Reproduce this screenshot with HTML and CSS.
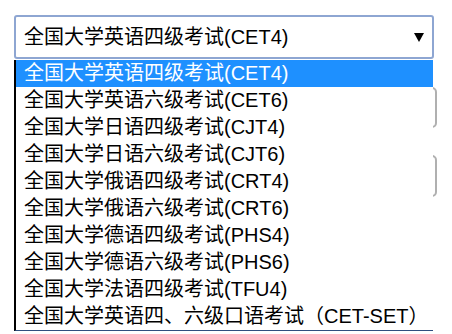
FILE: index.html
```html
<!DOCTYPE html>
<html lang="zh-CN">
<head>
<meta charset="utf-8">
<title>考试选择</title>
<link rel="stylesheet" href="styles.css">
</head>
<body>
<div class="page">
  <div class="select">
    <span class="select-text">全国大学英语四级考试(CET4)</span>
    <svg class="arrow" width="10" height="9" viewBox="0 0 10 9"><polygon points="0,0 10,0 5,9" fill="#000"/></svg>
  </div>
  <div class="field field-one"></div>
  <div class="field field-two"></div>

  <ul class="dropdown">
    <li class="option selected">全国大学英语四级考试(CET4)</li>
    <li class="option">全国大学英语六级考试(CET6)</li>
    <li class="option">全国大学日语四级考试(CJT4)</li>
    <li class="option">全国大学日语六级考试(CJT6)</li>
    <li class="option">全国大学俄语四级考试(CRT4)</li>
    <li class="option">全国大学俄语六级考试(CRT6)</li>
    <li class="option">全国大学德语四级考试(PHS4)</li>
    <li class="option">全国大学德语六级考试(PHS6)</li>
    <li class="option">全国大学法语四级考试(TFU4)</li>
    <li class="option">全国大学英语四、六级口语考试（CET-SET）</li>
  </ul>
</div>
</body>
</html>
```

FILE: styles.css
```css
html, body {
  margin: 0;
  padding: 0;
  background: #ffffff;
}

body {
  font-family: "Liberation Sans", "Noto Sans CJK SC", sans-serif;
  color: #000;
  width: 452px;
  height: 334px;
  overflow: hidden;
}

.page {
  position: relative;
  padding: 15px 0 0 14px;
}

.select {
  box-sizing: border-box;
  width: 420px;
  height: 44px;
  border: 2px solid #8ea6d2;
  border-radius: 3px;
  display: flex;
  align-items: center;
  justify-content: space-between;
  padding: 0 8px 0 8px;
  font-size: 20px;
  background: #fff;
}

.select-text {
  line-height: 24px;
  padding-bottom: 1px;
}

.arrow {
  display: block;
  margin-top: 1px;
}

.field {
  box-sizing: border-box;
  width: 423px;
  height: 41px;
  border: 2px solid #b0b0b0;
  border-radius: 5px;
}

.field-one {
  margin-top: 28px;
}

.field-two {
  margin-top: 27px;
  height: 42px;
}

.dropdown {
  position: absolute;
  left: 14px;
  top: 60px;
  width: 419px;
  box-sizing: border-box;
  margin: 0;
  padding: 0;
  list-style: none;
  background: #fff;
  border-left: 2px solid #000;
  border-bottom: 1px solid #2f4f7f;
}

.option {
  height: 27px;
  line-height: 27px;
  font-size: 20px;
  padding-left: 8px;
  white-space: nowrap;
}

.option.selected {
  background: #1e90ff;
  color: #fff;
}
```
